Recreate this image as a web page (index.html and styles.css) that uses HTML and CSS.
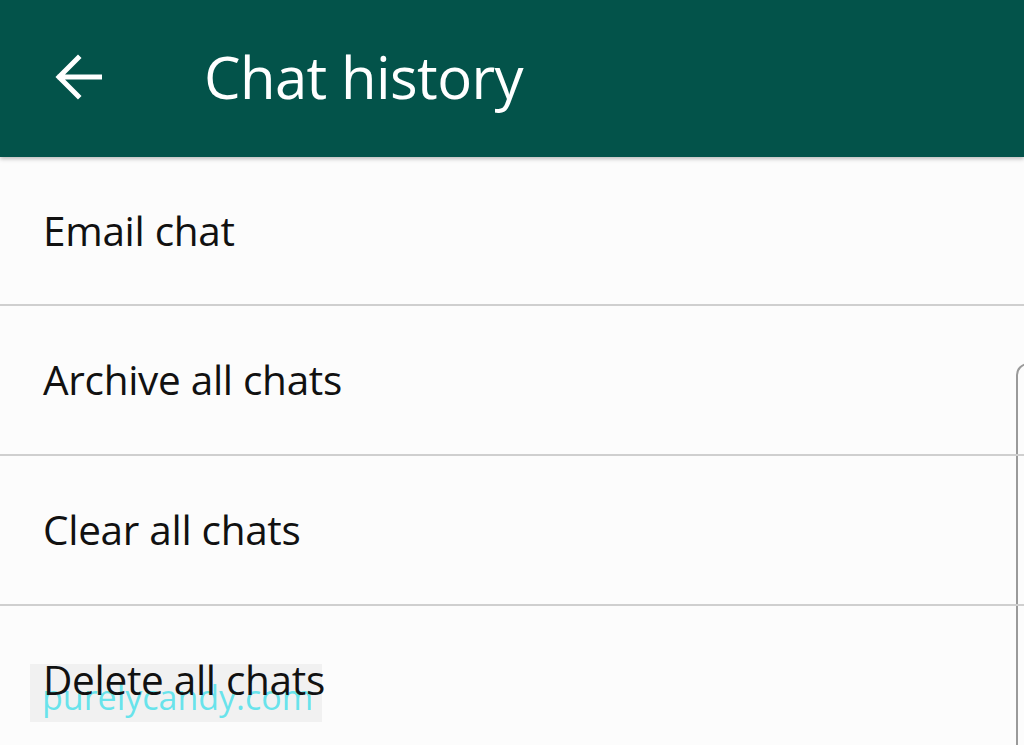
FILE: index.html
```html
<!DOCTYPE html>
<html lang="en">
<head>
  <meta charset="UTF-8">
  <title>Chat history</title>
  <link rel="stylesheet" href="styles.css">
</head>
<body>

<div class="header">
  <svg class="back" width="48" height="48" viewBox="0 0 48 48">
    <path d="M46 24H6M24 5L5 24L24 43" fill="none" stroke="#fff" stroke-width="5" stroke-linecap="square"/>
  </svg>
  <h1 class="title">Chat history</h1>
</div>

<ul class="list">
  <li>Email chat</li>
  <li>Archive all chats</li>
  <li>Clear all chats</li>
  <li>Delete all chats</li>
</ul>

<div class="scrollbar"></div>
<div class="mark">purelycandy.com</div>

</body>
</html>
```

FILE: styles.css
```css
* {
  margin: 0;
  padding: 0;
  list-style: none;
}

body {
  width: 1024px;
  height: 745px;
  overflow: hidden;
  background-color: #fcfcfc;
  font-family: "Open Sans", "Noto Sans", sans-serif;
  position: relative;
}

.header {
  height: 157px;
  background-color: #03534a;
  display: flex;
  align-items: center;
  box-shadow: 0 2px 4px rgba(0, 0, 0, .25);
  position: relative;
  z-index: 2;
}

.back {
  margin-left: 54px;
  margin-top: -4px;
}

.title {
  margin-left: 102px;
  margin-top: -4px;
  color: #fff;
  font-weight: 400;
  font-size: 58px;
  letter-spacing: -0.6px;
}

.list {
  position: relative;
  z-index: 1;
}

.list li {
  height: 150px;
  border-bottom: 2px solid #cfcfcf;
  display: flex;
  align-items: center;
  padding-left: 43px;
  padding-bottom: 2px;
  box-sizing: border-box;
  font-size: 40.5px;
  color: #111;
  letter-spacing: -0.3px;
}

.list li:first-child {
  height: 149px;
  padding-bottom: 0;
}

.scrollbar {
  position: absolute;
  left: 1016px;
  top: 363px;
  width: 20px;
  height: 400px;
  border: 2px solid #9a9a9a;
  border-radius: 12px;
}

.mark {
  position: absolute;
  left: 30px;
  top: 664px;
  width: 292px;
  height: 58px;
  background-color: #f1f1f1;
  color: rgba(80, 225, 235, .85);
  font-size: 34px;
  line-height: 58px;
  padding-left: 12px;
  padding-top: 4px;
  box-sizing: border-box;
}
```
